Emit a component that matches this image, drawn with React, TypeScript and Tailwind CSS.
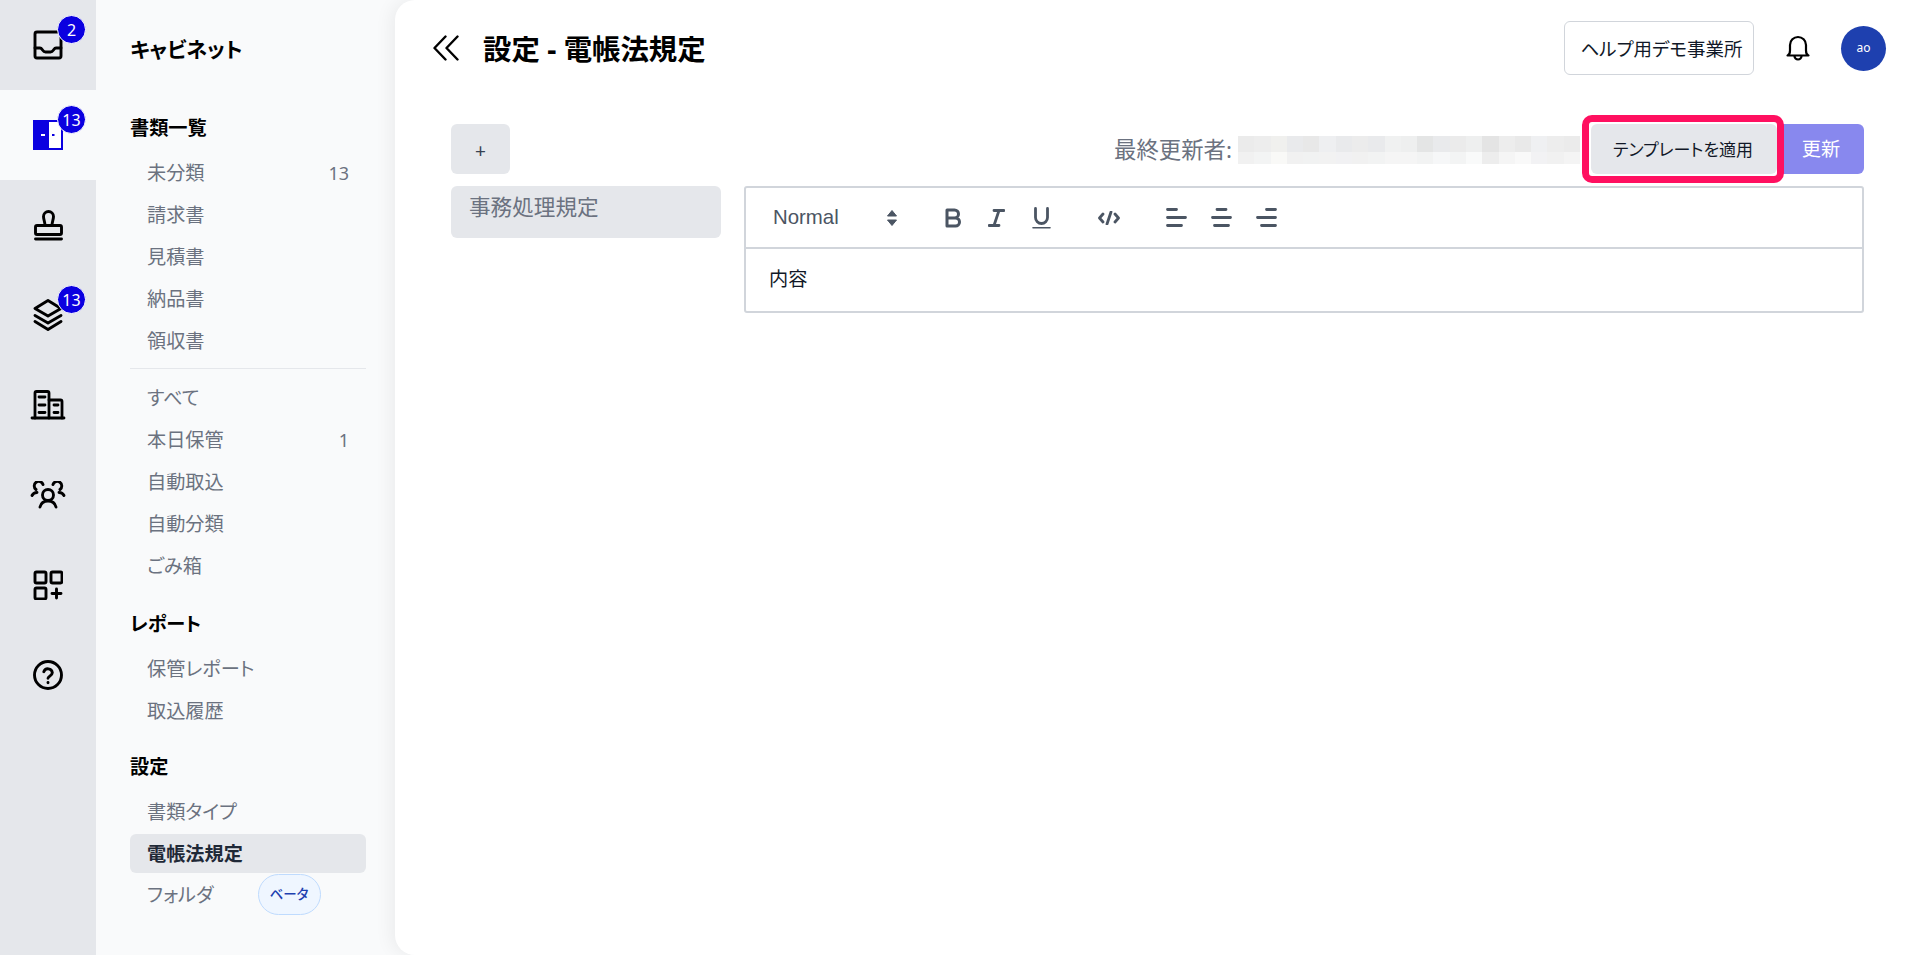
import React from "react";

const Ic = ({ w = 30, h = 30, sw = 2.9, children }: { w?: number; h?: number; sw?: number; children: React.ReactNode }) => (
  <svg width={w} height={h} viewBox={`0 0 ${w} ${h}`} fill="none" stroke="currentColor" strokeWidth={sw} strokeLinecap="round" strokeLinejoin="round">
    {children}
  </svg>
);

const Badge = ({ n }: { n: string }) => (
  <span className="absolute left-[57px] top-[15px] flex h-[29px] w-[29px] items-center justify-center rounded-full border border-white bg-[#0b00e0] text-[16px] leading-none text-white">
    {n}
  </span>
);

const railItems: { icon: React.ReactNode; badge?: string; active?: boolean }[] = [
  {
    badge: "2",
    icon: (
      <Ic>
        <rect x="2" y="2" width="26" height="26" rx="2" />
        <path d="M2 18h5c1.5 0 1.8 1 2.5 2s1.5 2 3 2h5c1.500 0 2.300-1 3-2s1-2 2.500-2h5" />
      </Ic>
    ),
  },
  {
    badge: "13",
    active: true,
    icon: (
      <svg width="30" height="30" viewBox="0 0 30 30">
        <rect width="30" height="30" fill="#0b00e0" />
        <rect x="16" y="2" width="12" height="26" fill="#fff" />
        <rect x="8" y="14" width="4" height="2" fill="#fff" />
        <rect x="19" y="14" width="2.5" height="2" fill="#0b00e0" />
      </svg>
    ),
  },
  {
    icon: (
      <Ic w={31} h={31}>
        <path d="M12 15.500C12 12 10.500 9.500 10.500 6.500a5 5 0 0 1 10 0c0 3-1.500 5.500-1.500 9" />
        <rect x="2.5" y="15.5" width="26" height="9" rx="1.5" />
        <path d="M2.5 29h26" />
      </Ic>
    ),
  },
  {
    badge: "13",
    icon: (
      <Ic w={32} h={32}>
        <path d="M16 1.5 29 9.5 16 17 3 9.500Z" />
        <path d="M3 16.500 16 24 29 16.500" />
        <path d="M3 22.500 16 30.500 29 22.500" />
      </Ic>
    ),
  },
  {
    icon: (
      <Ic w={36} h={30} sw={2.8}>
        <path d="M5 28V3a1.500 1.500 0 0 1 1.500-1.500h11A1.500 1.500 0 0 1 19 3v25" />
        <path d="M19 10h11.500A1.500 1.500 0 0 1 32 11.500V28" />
        <path d="M2 28h32" />
        <path d="M9 7h6M9 15h6M9 22.500h6M24 15h4M24 22.500h4" />
      </Ic>
    ),
  },
  {
    icon: (
      <Ic w={36} h={28} sw={2.9}>
        <circle cx="18" cy="14" r="5.500" />
        <path d="M10 26c1-4 4-6 8-6s7 2 8 6" />
        <path d="M6 8.500a4.500 4.500 0 1 1 7-5" />
        <path d="M2 14.500c1-2 3-3 5-3" />
        <path d="M30 8.500a4.500 4.500 0 1 0-7-5" />
        <path d="M34 14.500c-1-2-3-3-5-3" />
      </Ic>
    ),
  },
  {
    icon: (
      <Ic>
        <rect x="2" y="2" width="11" height="11" rx="1.500" />
        <rect x="18" y="2" width="11" height="11" rx="1.500" />
        <rect x="2" y="18" width="11" height="11" rx="1.500" />
        <path d="M23.500 19v9M19 23.500h9" />
      </Ic>
    ),
  },
  {
    icon: (
      <Ic>
        <circle cx="15" cy="15" r="13.500" />
        <path d="M10.800 11.700a4.400 4.400 0 0 1 8.500 1c0 3-4.300 3.600-4.300 5.600" />
        <path d="M15 22.500v.3" />
      </Ic>
    ),
  },
];

const Row = ({ label, count, active }: { label: string; count?: string; active?: boolean }) => (
  <div
    className={
      "flex h-[39px] items-center justify-between rounded-[6px] pb-[1px] pl-[17px] pr-[17px] pt-[1px] text-[19.2px] leading-none " +
      (active ? "mb-[2px] mt-[1px] bg-[#e5e7eb] font-semibold text-[#1f2937]" : "mb-[3px] text-[#6b7280]")
    }
  >
    <span className="whitespace-nowrap">{label}</span>
    {count && <span className="text-[18px]">{count}</span>}
  </div>
);

const Heading = ({ label }: { label: string }) => (
  <div className="mb-[4px] flex h-[42px] items-center text-[19.2px] font-semibold leading-none text-black">{label}</div>
);

const topCells = ["#ebebeb", "#ededed", "#f0f0ee", "#e9eaec", "#e8e8e8", "#eeeff1", "#e9eaec", "#ececec", "#e9eaec", "#f0f1f1", "#eeefef", "#e4e5e5", "#e9eaec", "#ebebeb", "#eeefef", "#e4e4e4", "#ededed", "#e9e9e9", "#eff0f2", "#ededed", "#ebebeb"];
const bottomCells = ["#f1f1f1", "#f3f4f4", "#f9f9f7", "#f1f1f1", "#f1f2f2", "#f2f2f2", "#f1f1f3", "#f1f1f1", "#f2f3f3", "#f5f5f5", "#f5f5f5", "#f2f3f3", "#f6f7f8", "#f3f4f4", "#f9fafa", "#ededed", "#f5f5f5", "#f9f9f9", "#f2f2f4", "#f1f1f1", "#f4f4f4"];

export default function App() {
  return (
    <div className="flex h-[955px] w-[1920px] overflow-hidden bg-[#f9fafb] [font-family:'Noto_Sans','Noto_Sans_CJK_JP',sans-serif] [font-feature-settings:'palt']">
      <nav className="flex w-[96px] shrink-0 flex-col bg-[#e5e7eb] text-black">
        {railItems.map((it, i) => (
          <div key={i} className={"relative flex h-[90px] items-center justify-center " + (it.active ? "bg-[#f9fafb]" : "")}>
            {it.icon}
            {it.badge && <Badge n={it.badge} />}
          </div>
        ))}
      </nav>

      <aside className="w-[299px] shrink-0 pl-[34px] pr-[29px]">
        <div className="flex h-[98px] items-center text-[21px] font-semibold leading-none text-black">キャビネット</div>
        <div className="mt-[9px]">
          <Heading label="書類一覧" />
          <Row label="未分類" count="13" />
          <Row label="請求書" />
          <Row label="見積書" />
          <Row label="納品書" />
          <Row label="領収書" />
          <div className="mb-[9px] mt-[8px] h-px bg-[#e5e7eb]" />
          <Row label="すべて" />
          <Row label="本日保管" count="1" />
          <Row label="自動取込" />
          <Row label="自動分類" />
          <Row label="ごみ箱" />
        </div>
        <div className="mt-[18px]">
          <Heading label="レポート" />
          <Row label="保管レポート" />
          <Row label="取込履歴" />
        </div>
        <div className="mt-[16px]">
          <Heading label="設定" />
          <Row label="書類タイプ" />
          <Row label="電帳法規定" active />
          <div className="flex h-[39px] items-center pl-[17px] text-[19.2px] leading-none text-[#6b7280]">
            <span>フォルダ</span>
            <span className="ml-[44px] flex h-[41px] w-[63px] items-center justify-center rounded-full border border-[#bfdbfe] bg-[#eff6ff] text-[13.5px] font-medium text-[#1e40af]">
              ベータ
            </span>
          </div>
        </div>
      </aside>

      <main className="min-w-0 flex-1 rounded-l-[20px] bg-white shadow-[-4px_0_18px_rgba(0,0,0,0.06)]">
        <header className="flex h-[96px] items-center pl-[38px] pr-[34px]">
          <svg width="26" height="26" viewBox="0 0 26 26" fill="none" stroke="#000" strokeWidth="2.4" strokeLinecap="round" strokeLinejoin="round">
            <path d="M12.500 1.500 1.500 13l11 11.500" />
            <path d="M24.500 1.500 13.500 13l11 11.500" />
          </svg>
          <h1 className="ml-[24px] pt-[2px] text-[28.4px] font-bold leading-none text-black">設定 - 電帳法規定</h1>
          <div className="ml-auto flex h-[54px] w-[190px] items-center justify-center rounded-[6px] border border-[#d1d5db] pl-[5px] pt-[1px] text-[18.5px] text-[#111827]">
            ヘルプ用デモ事業所
          </div>
          <svg className="ml-[32px]" width="24" height="26" viewBox="0 0 24 26" fill="none" stroke="#000" strokeWidth="2.2" strokeLinecap="round" strokeLinejoin="round">
            <path d="M1.500 20.500c1.500-.5 2.500-2 2.500-5V10a8 8 0 0 1 16 0v5.500c0 3 1 4.500 2.500 5z" />
            <path d="M8.500 21a3.500 3.500 0 0 0 7 0" />
          </svg>
          <div className="ml-[31px] flex h-[45px] w-[45px] items-center justify-center rounded-full bg-[#1e40af] text-[12px] text-white">ao</div>
        </header>

        <div className="pl-[56px] pr-[56px] pt-[28px]">
          <div className="flex h-[50px] items-center">
            <div className="flex h-[50px] w-[59px] items-center justify-center rounded-[6px] bg-[#e5e7eb] pt-[5px] text-[19.2px] text-[#374151]">+</div>
            <div className="ml-auto flex items-center">
              <span className="pt-[2px] text-[22.4px] leading-none text-[#6b7280]">最終更新者:</span>
              <div className="ml-[6px] mr-[11px] mt-[2px] w-[342px]">
                <div className="flex h-[16px]">
                  {topCells.map((c, i) => (
                    <div key={i} className="flex-1" style={{ backgroundColor: c }} />
                  ))}
                </div>
                <div className="flex h-[12px]">
                  {bottomCells.map((c, i) => (
                    <div key={i} className="flex-1" style={{ backgroundColor: c }} />
                  ))}
                </div>
              </div>
              <div className="relative flex h-[50px] w-[186px] items-center justify-center rounded-[6px] bg-[#e5e7eb] pr-[2px] pt-[1px] text-[17px] text-[#111827]">
                テンプレートを適用
                <div className="absolute bottom-[-9px] left-[-9px] right-[-7px] top-[-9px] z-10 rounded-[10px] border-[7px] border-[#ff1060]" />
              </div>
              <div className="flex h-[50px] w-[87px] items-center justify-center rounded-r-[6px] bg-[#8888ee] pl-[1px] text-[19.2px] text-white">更新</div>
            </div>
          </div>

          <div className="mt-[12px] flex items-start">
            <div className="h-[52px] w-[270px] shrink-0 rounded-[6px] bg-[#e5e7eb] pl-[18px] pt-[5px] text-[21.6px] leading-[32px] text-[#6b7280]">事務処理規定</div>
            <div className="ml-[23px] flex-1 rounded-[3px] border-2 border-[#d1d5db]">
              <div className="flex h-[61px] items-center border-b-2 border-[#d1d5db] pl-[27px] text-[#4b5563]">
                <span className="w-[113px] text-[20.4px] [font-family:'Liberation_Sans',sans-serif]">Normal</span>
                <svg width="12" height="18" viewBox="0 0 12 18" fill="currentColor" stroke="currentColor" strokeWidth="1" strokeLinejoin="round">
                  <path d="M6 1.500 10.500 7h-9zM6 16.500 1.500 11h9z" />
                </svg>
                <svg className="ml-[47px]" width="17" height="20" viewBox="0 0 17 20" fill="none" stroke="currentColor" strokeWidth="3" strokeLinecap="round" strokeLinejoin="round">
                  <path d="M2 2h7.500a4 4 0 0 1 0 8H2zM2 10h8.500a4 4 0 0 1 0 8H2z" />
                </svg>
                <svg className="ml-[26px]" width="17" height="18" viewBox="0 0 17 18" fill="none" stroke="currentColor" strokeWidth="2.800" strokeLinecap="round">
                  <path d="M6 1.500h10M1 16.500h10M11 1.500 6 16.500" />
                </svg>
                <svg className="ml-[27px]" width="19" height="22" viewBox="0 0 19 22" fill="none" stroke="currentColor" strokeWidth="2.800" strokeLinecap="round">
                  <path d="M3.500 1.500v9a6 6 0 0 0 12 0v-9" />
                  <path d="M1 20.800h17" strokeWidth="1.600" />
                </svg>
                <svg className="ml-[47px]" width="22" height="14" viewBox="0 0 22 14" fill="none" stroke="currentColor" strokeWidth="2.800" strokeLinecap="round" strokeLinejoin="round">
                  <path d="M5 3 1.500 7 5 11M17 3l3.500 4L17 11M13 1 9 13" />
                </svg>
                <svg className="ml-[46px]" width="21" height="19" viewBox="0 0 21 19" fill="none" stroke="currentColor" strokeWidth="2.800" strokeLinecap="round">
                  <path d="M1.500 1.500h9M1.500 9.500h18M1.500 17.500h14" />
                </svg>
                <svg className="ml-[24px]" width="21" height="19" viewBox="0 0 21 19" fill="none" stroke="currentColor" strokeWidth="2.800" strokeLinecap="round">
                  <path d="M6 1.500h9M1.500 9.500h18M3.500 17.500h14" />
                </svg>
                <svg className="ml-[24px]" width="21" height="19" viewBox="0 0 21 19" fill="none" stroke="currentColor" strokeWidth="2.800" strokeLinecap="round">
                  <path d="M10.500 1.500h9M1.500 9.500h18M5.500 17.500h14" />
                </svg>
              </div>
              <div className="flex h-[62px] items-center pb-[2px] pl-[23px] text-[19.2px] text-[#111827]">内容</div>
            </div>
          </div>
        </div>
      </main>
    </div>
  );
}
